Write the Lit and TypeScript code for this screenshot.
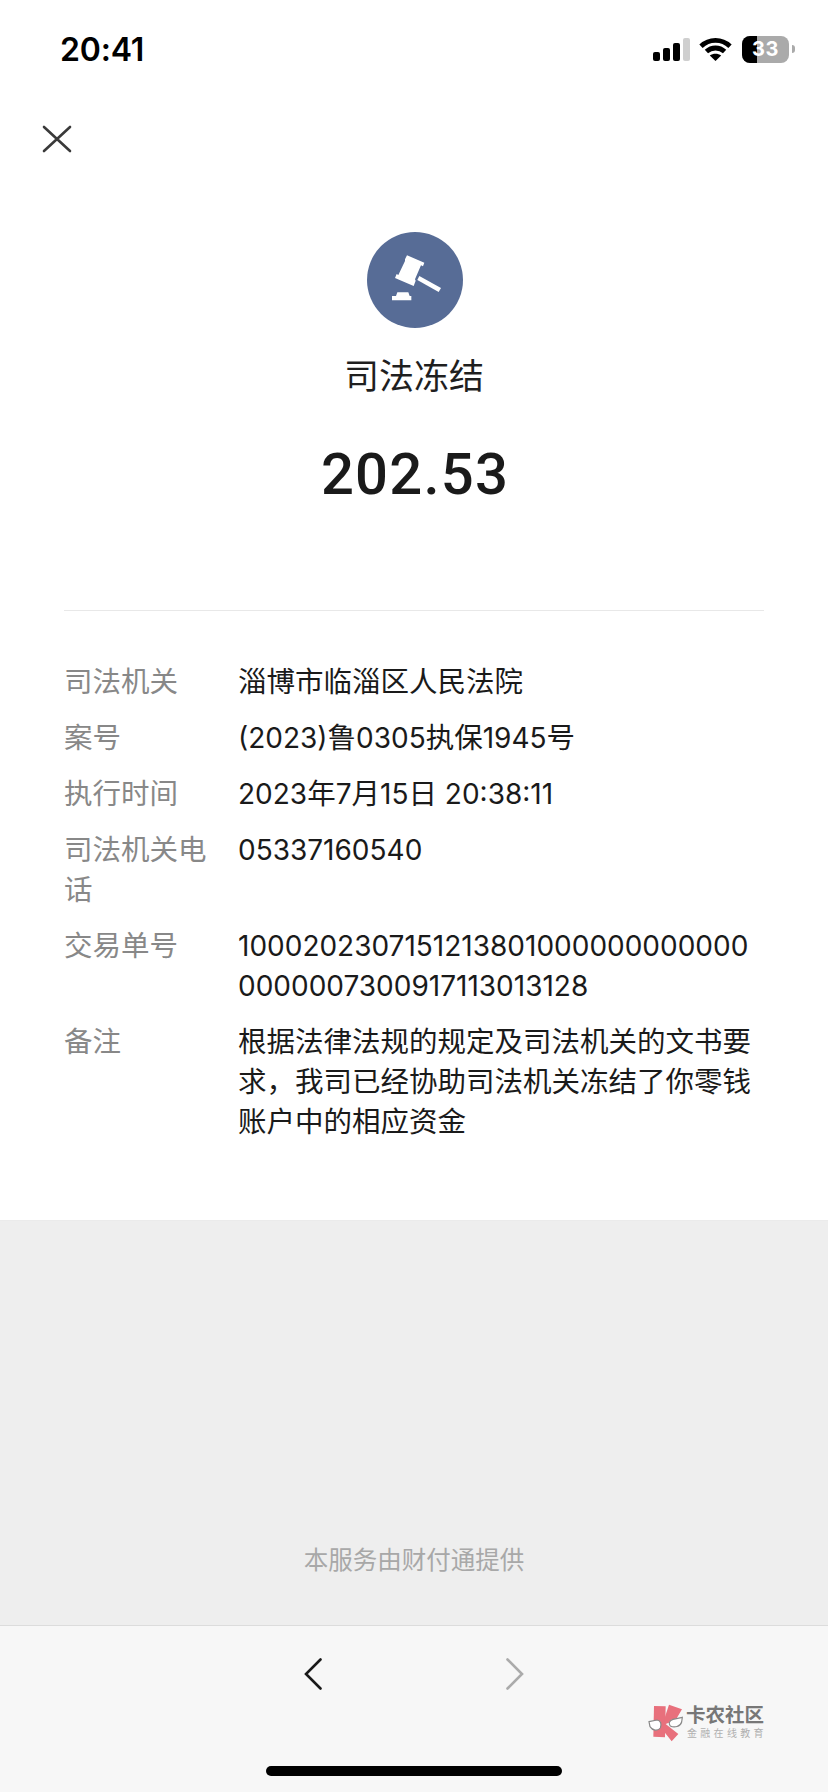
import { LitElement, html, css, svg } from "lit";
import { customElement } from "lit/decorators.js";

const rows: [string, string][] = [
  ["司法机关", "淄博市临淄区人民法院"],
  ["案号", "(2023)鲁0305执保1945号"],
  ["执行时间", "2023年7月15日 20:38:11"],
  ["司法机关电话", "05337160540"],
  ["交易单号", "1000202307151213801000000000000" + "0000007300917113013128"],
  ["备注", "根据法律法规的规定及司法机关的文书要求，我司已经协助司法机关冻结了你零钱账户中的相应资金"],
];

const runs = (text: string) =>
  text.split(/([\u3000-\u9fff\uff00-\uffef]+)/).map((part, i) =>
    i % 2 ? html`<span class="cjk">${part}</span>` : part
  );

@customElement("app-root")
export class AppRoot extends LitElement {
  static styles = css`
    :host {
      display: block;
      width: 828px;
      height: 1792px;
      background: #fff;
      font-family: Inter, "Noto Sans CJK SC", sans-serif;
      color: #1a1a1a;
    }
    .page { position: relative; height: 1792px; display: flex; flex-direction: column; overflow: hidden; }
    .status { height: 98px; display: flex; align-items: center; justify-content: space-between; padding: 0 33px 0 60px; box-sizing: border-box; }
    .time { font-size: 32px; font-weight: 600; color: #000; letter-spacing: -0.2px; }
    .sys { display: flex; align-items: center; }
    .signal { width: 37px; height: 23px; display: block; }
    .wifi { width: 33px; height: 24px; display: block; margin-left: 9px; }
    .battery { margin-left: 10px; position: relative; width: 47px; height: 27px; border-radius: 8px; overflow: hidden; background: #aaaaaa; color: #fff; font-size: 20px; font-weight: 700; line-height: 27px; text-align: center; font-family: Inter, sans-serif; }
    .battery .fill { position: absolute; left: 0; top: 0; bottom: 0; width: 15px; background: #000; }
    .battery .num { position: relative; letter-spacing: 0.5px; }
    .nub { width: 3px; height: 8px; margin-left: 3px; background: #aaaaaa; border-radius: 0 3px 3px 0; }
    .close { height: 82px; display: flex; align-items: center; padding-left: 42px; }
    .close svg { width: 30px; height: 28px; display: block; }
    .hero { padding-top: 52px; display: flex; flex-direction: column; align-items: center; }
    .badge { width: 96px; height: 96px; display: block; margin-left: 1px; }
    .title { margin-top: 24px; font-size: 35px; line-height: 48px; color: #1f1f1f; }
    .amount { margin-top: 39px; font-family: Roboto, sans-serif; font-size: 58px; line-height: 70px; font-weight: 500; letter-spacing: 1.2px; margin-left: 2px; color: #1a1a1a; }
    .divider { margin: 101px 64px 0; height: 1px; background: #e8e8e8; }
    .details { padding: 51px 64px 78px; display: flex; flex-direction: column; gap: 16px; }
    .row { display: flex; font-size: 28px; line-height: 40px; }
    .label { width: 145px; margin-right: 29px; flex: none; color: #888; font-size: 28.5px; }
    .value { flex: 1; min-width: 0; word-break: break-all; color: #1a1a1a; }
    .cjk { font-size: 28.5px; }
    .gray { flex: 1; background: #eeeeee; border-top: 1px solid #ebebeb; display: flex; align-items: flex-end; justify-content: center; padding-bottom: 49px; }
    .provider { font-size: 24.5px; line-height: 32px; color: #a8a8a8; }
    .footer { height: 167px; box-sizing: border-box; background: #f7f7f7; border-top: 1px solid #dcdcdc; padding-top: 32px; display: flex; justify-content: center; gap: 184px; align-items: flex-start; }
    .footer svg { width: 18px; height: 32px; display: block; }
    .home { position: absolute; left: 266px; bottom: 16px; width: 296px; height: 10px; border-radius: 5px; background: #000; }
    .mark { position: absolute; left: 645px; top: 1700px; display: flex; }
    .mark svg { width: 40px; height: 45px; display: block; }
    .mark-text { margin-left: 1px; padding-top: 4px; display: flex; flex-direction: column; }
    .mark-a { font-size: 19.5px; line-height: 22px; font-weight: 700; color: #777; white-space: nowrap; }
    .mark-b { margin-top: 1px; padding-left: 1px; font-size: 10px; line-height: 13px; letter-spacing: 3.3px; color: #b0b0b0; white-space: nowrap; }
  `;

  render() {
    return html`
      <div class="page">
        <div class="status">
          <span class="time">20:41</span>
          <div class="sys">
            <svg class="signal" viewBox="0 0 37 23">
              <rect x="0" y="14" width="7" height="9" rx="2" fill="#000" />
              <rect x="10" y="10" width="7" height="13" rx="2" fill="#000" />
              <rect x="20" y="5" width="7" height="18" rx="2" fill="#000" />
              <rect x="30" y="0" width="7" height="23" rx="2" fill="#cfcfcf" />
            </svg>
            <svg class="wifi" viewBox="0 0 33 24" fill="none" stroke="#000" stroke-width="4.8">
              <path d="M2 9.2C10.2 1.4 22.8 1.4 31 9.2" />
              <path d="M7.4 14.6C12.6 9.8 20.4 9.8 25.6 14.6" />
              <path d="M16.5 24L10.8 18.6C14 16 19 16 22.2 18.6Z" fill="#000" stroke="none" />
            </svg>
            <div class="battery"><div class="fill"></div><span class="num">33</span></div>
            <div class="nub"></div>
          </div>
        </div>
        <div class="close">
          <svg viewBox="0 0 30 28" fill="none" stroke="#3a3a3a" stroke-width="2.6" stroke-linecap="round">
            <path d="M2 2L28 26M28 2L2 26" />
          </svg>
        </div>
        <div class="hero">
          <svg class="badge" viewBox="-54 -54 288 288">
            <circle cx="90" cy="90" r="144" fill="#576c96" />
            <g fill="#fff">
              <path d="M66 16L118 38L114 49L108 46L90 88L92 92L86 108L30 84L35 72L40 75L60 33L60 28Z" />
              <path d="M103 78L168 114L161 126L97 90Z" />
              <path d="M37 127H70L74 138H79V151H21V138H33Z" />
            </g>
          </svg>
          <div class="title">司法冻结</div>
          <div class="amount">202.53</div>
        </div>
        <div class="divider"></div>
        <div class="details">
          ${rows.map(
            ([k, v]) => html`<div class="row"><div class="label">${k}</div><div class="value">${runs(v)}</div></div>`
          )}
        </div>
        <div class="gray"><div class="provider">本服务由财付通提供</div></div>
        <div class="footer">
          <svg viewBox="0 0 18 32" fill="none" stroke="#1a1a1a" stroke-width="2.6" stroke-linecap="round" stroke-linejoin="miter">
            <path d="M16.5 1.5L2 16L16.5 30.5" />
          </svg>
          <svg viewBox="0 0 18 32" fill="none" stroke="#ababab" stroke-width="2.6" stroke-linecap="round" stroke-linejoin="miter">
            <path d="M1.5 1.5L16 16L1.5 30.5" />
          </svg>
        </div>
        <div class="mark">
          <svg viewBox="0 0 120 135">
            ${svg`
              <path d="M27 18L62 19L60 112L25 110Z" fill="#e8707c" />
              <path d="M72 14L111 28L92 60L62 72L100 102L80 124L58 96L60 50Z" fill="#e8707c" />
              <path d="M12 65L36 60C48 62 50 72 46 84C38 94 22 92 15 80Z" fill="#fff" stroke="#888" stroke-width="3.5" />
              <path d="M112 52L84 58C72 62 70 72 76 78C88 84 106 80 110 66Z" fill="#fff" stroke="#888" stroke-width="3.5" />
            `}
          </svg>
          <div class="mark-text">
            <div class="mark-a">卡农社区</div>
            <div class="mark-b">金融在线教育</div>
          </div>
        </div>
        <div class="home"></div>
      </div>
    `;
  }
}
